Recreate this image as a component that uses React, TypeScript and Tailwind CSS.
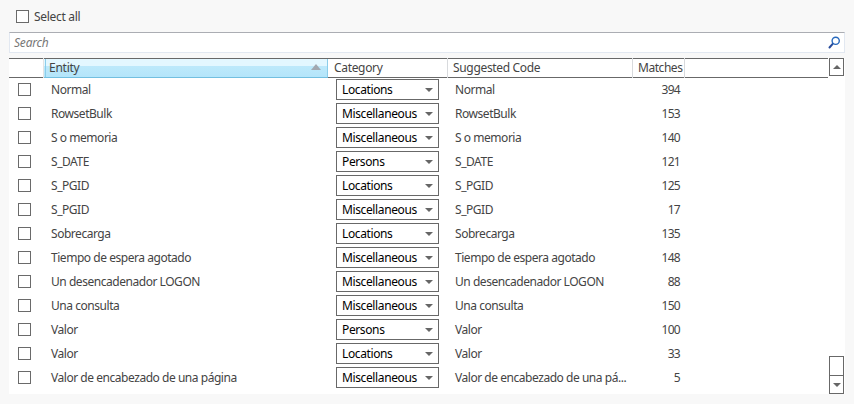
type Row = { entity: string; category: string; code?: string; matches: number };

const rows: Row[] = [
  { entity: "Normal", category: "Locations", matches: 394 },
  { entity: "RowsetBulk", category: "Miscellaneous", matches: 153 },
  { entity: "S o memoria", category: "Miscellaneous", matches: 140 },
  { entity: "S_DATE", category: "Persons", matches: 121 },
  { entity: "S_PGID", category: "Locations", matches: 125 },
  { entity: "S_PGID", category: "Miscellaneous", matches: 17 },
  { entity: "Sobrecarga", category: "Locations", matches: 135 },
  { entity: "Tiempo de espera agotado", category: "Miscellaneous", matches: 148 },
  { entity: "Un desencadenador LOGON", category: "Miscellaneous", matches: 88 },
  { entity: "Una consulta", category: "Miscellaneous", matches: 150 },
  { entity: "Valor", category: "Persons", matches: 100 },
  { entity: "Valor", category: "Locations", matches: 33 },
  {
    entity: "Valor de encabezado de una página",
    category: "Miscellaneous",
    code: "Valor de encabezado de una pá...",
    matches: 5,
  },
];

function Checkbox() {
  return <span className="block size-[13px] shrink-0 border border-[#6a6a6a] bg-white" />;
}

function Arrow({ up = false }: { up?: boolean }) {
  return (
    <svg width="8" height="4" viewBox="0 0 8 4" className="block shrink-0">
      <path d={up ? "M0 4 4 0 8 4z" : "M0 0h8L4 4z"} fill="#666" />
    </svg>
  );
}

function Separator() {
  return <span className="h-full w-px shrink-0 bg-[#d8dadd]" />;
}

function Header() {
  return (
    <div className="flex h-5 w-[819px] leading-[18px] tracking-[-0.33px]">
      <div className="w-[34px] border-y border-[#686868]" />
      <div className="w-px bg-[#e4e4e4]" />
      <div className="flex w-[284px] justify-between border-y border-t-[#686868] border-b-[#72bfe0] bg-[linear-gradient(#e3f7ff_0_7px,#bde9fb_7px,#b4e5fa)]">
        <span className="ml-px w-px bg-[#8bcdea]" />
        <span className="ml-[3px] grow tracking-[-0.25px]">Entity</span>
        <svg width="10" height="6" viewBox="0 0 10 6" className="mt-[5px] mr-[6px]">
          <path d="M0 6 5 0 10 6z" fill="#a2a8b0" />
        </svg>
        <span className="w-px bg-[#8bcdea]" />
      </div>
      <div className="w-[119px] border-y border-[#686868] pl-[6px]">Category</div>
      <Separator />
      <div className="w-[184px] border-y border-[#686868] pl-[5px]">Suggested Code</div>
      <Separator />
      <div className="w-[51px] border-y border-[#686868] pl-[5px] tracking-[-0.45px]">Matches</div>
      <Separator />
      <div className="grow border-y border-[#686868]" />
    </div>
  );
}

export default function App() {
  return (
    <div className="h-[404px] w-[854px] overflow-hidden bg-[#f8f8f8] px-[9px] pt-[7px] font-['Noto_Sans',sans-serif] text-[12px] tracking-[-0.3px] whitespace-nowrap text-[#444]">
      <div className="flex h-[25px] items-start pl-[7px]">
        <span className="mt-[3px]"><Checkbox /></span>
        <span className="ml-[5px] leading-5">Select all</span>
      </div>
      <div className="flex h-[21px] w-[836px] items-center justify-between border border-[#e2e8f1] border-t-[#abadb3] bg-white pr-[3px] pl-1 text-[#777] italic">
        <span className="tracking-[-0.2px]">Search</span>
        <svg width="13" height="13" viewBox="0 0 13 13" fill="none">
          <path d="M4.7 7.8 1.5 11.5" stroke="#274b9b" strokeWidth="2" strokeLinecap="round" />
          <circle cx="7.7" cy="4.8" r="3.6" stroke="#2869bd" strokeWidth="1.4" />
        </svg>
      </div>
      <div className="mt-[5px] flex h-[336px] w-[836px] bg-white">
        <div className="w-[819px]">
          <Header />
          {rows.map((row, i) => (
            <div key={i} className="flex h-6 leading-6 tracking-[-0.46px]">
              <div className="w-[42px] pt-[5px] pl-[9px]"><Checkbox /></div>
              <div className="w-[285px]">{row.entity}</div>
              <div className="mt-px flex h-[21px] w-[103px] items-center justify-between border border-[#686868] pr-[5px] pl-[5px] leading-[19px] tracking-[-0.38px] text-black">
                <span>{row.category}</span>
                <Arrow />
              </div>
              <div className="w-[177px] pl-4">{row.code ?? row.entity}</div>
              <div className="w-[64px] text-right tracking-[-0.7px]">{row.matches}</div>
            </div>
          ))}
        </div>
        <div className="ml-px flex w-[15px] flex-col">
          <div className="flex h-[18px] items-center justify-center border border-[#686868]"><Arrow up /></div>
          <div className="grow" />
          <div className="h-5 border border-[#686868]" />
          <div className="-mt-px flex h-[19px] items-center justify-center border border-[#686868]"><Arrow /></div>
        </div>
      </div>
    </div>
  );
}
